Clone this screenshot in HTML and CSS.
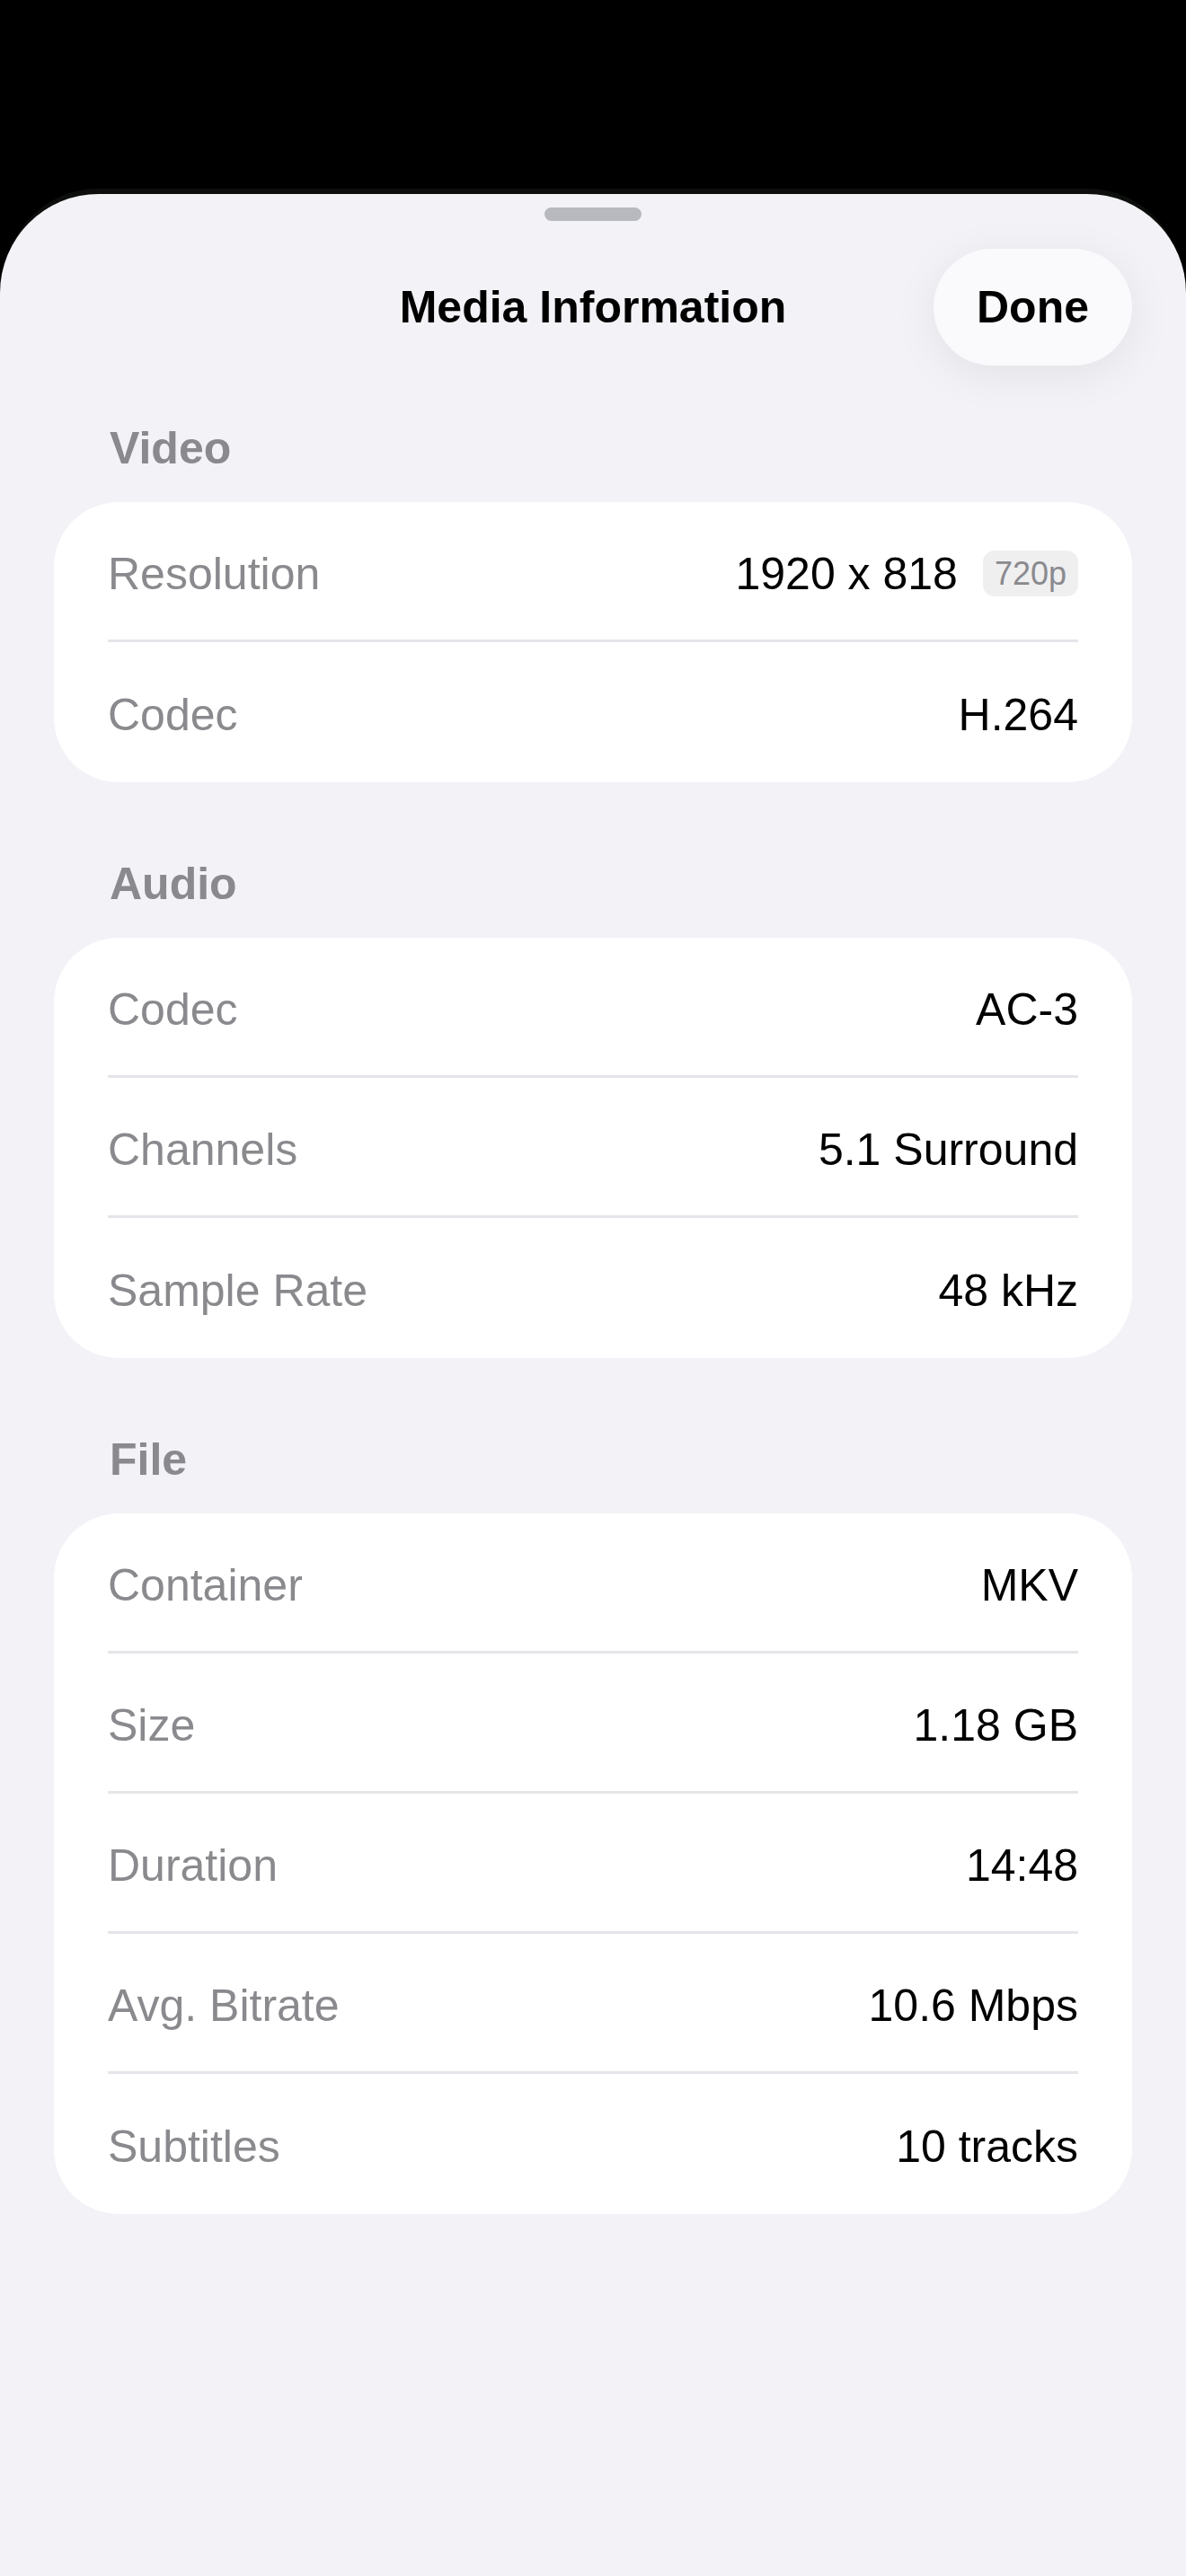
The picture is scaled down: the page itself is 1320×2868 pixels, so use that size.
FILE: index.html
```html
<!DOCTYPE html>
<html lang="en">
<head>
<meta charset="utf-8"/>
<meta content="width=device-width, initial-scale=1.0" name="viewport"/>
<title>Media Information</title>
<link rel="stylesheet" href="styles.css">
</head>
<body>
<div class="sheet">
  <div class="grabber"></div>

  <div class="navbar">
    <span></span>
    <h1 class="nav-title">Media Information</h1>
    <button class="done-btn">Done</button>
  </div>

  <!-- Video -->
  <h2 class="section-title">Video</h2>
  <div class="card">
    <div class="row">
      <span class="row-label">Resolution</span>
      <span class="row-value"><span>1920 x 818</span><span class="badge">720p</span></span>
    </div>
    <div class="row">
      <span class="row-label">Codec</span>
      <span class="row-value">H.264</span>
    </div>
  </div>

  <!-- Audio -->
  <h2 class="section-title">Audio</h2>
  <div class="card">
    <div class="row">
      <span class="row-label">Codec</span>
      <span class="row-value">AC-3</span>
    </div>
    <div class="row">
      <span class="row-label">Channels</span>
      <span class="row-value">5.1 Surround</span>
    </div>
    <div class="row">
      <span class="row-label">Sample Rate</span>
      <span class="row-value">48 kHz</span>
    </div>
  </div>

  <!-- File -->
  <h2 class="section-title">File</h2>
  <div class="card">
    <div class="row">
      <span class="row-label">Container</span>
      <span class="row-value">MKV</span>
    </div>
    <div class="row">
      <span class="row-label">Size</span>
      <span class="row-value">1.18 GB</span>
    </div>
    <div class="row">
      <span class="row-label">Duration</span>
      <span class="row-value">14:48</span>
    </div>
    <div class="row">
      <span class="row-label">Avg. Bitrate</span>
      <span class="row-value">10.6 Mbps</span>
    </div>
    <div class="row">
      <span class="row-label">Subtitles</span>
      <span class="row-value">10 tracks</span>
    </div>
  </div>
</div>
</body>
</html>
```

FILE: styles.css
```css
body {
  margin: 0;
  background: #000;
  font-family: "Liberation Sans", Arial, sans-serif;
  color: #000;
}

.sheet {
  margin-top: 216px;
  min-height: 2652px;
  box-sizing: border-box;
  background: #f2f2f7;
  border-radius: 110px 110px 0 0;
  box-shadow: 0 -10px 0 -4px #0c0f0b;
  padding: 15px 60px 0;
}

.grabber {
  width: 108px;
  height: 15px;
  margin: 0 auto;
  border-radius: 8px;
  background: #b8b8bf;
}

.navbar {
  display: grid;
  grid-template-columns: 1fr auto 1fr;
  align-items: center;
  height: 130px;
  margin-top: 31px;
}

.nav-title {
  margin: 0;
  font-size: 50px;
  font-weight: bold;
  line-height: 60px;
}

.done-btn {
  justify-self: end;
  width: 221px;
  height: 130px;
  border: none;
  border-radius: 65px;
  background: #fafafd;
  box-shadow: 0 10px 50px rgba(0, 0, 0, 0.07);
  font-family: inherit;
  font-size: 50px;
  font-weight: bold;
  color: #000;
  padding: 0;
}

.section-title {
  margin: 62px 0 30px;
  padding-left: 62px;
  font-size: 50px;
  font-weight: bold;
  line-height: 60px;
  color: #8a8a8e;
}

.card + .section-title {
  margin-top: 83px;
}

.card {
  background: #fff;
  border-radius: 72px;
  padding: 0 60px;
}

.row {
  display: flex;
  justify-content: space-between;
  align-items: center;
  height: 156px;
  box-sizing: border-box;
  padding-top: 6px;
  border-bottom: 3px solid #e5e5ea;
  font-size: 50px;
}

.row:last-child {
  border-bottom: none;
}

.row-label {
  color: #8a8a8e;
}

.row-value {
  display: flex;
  align-items: center;
  gap: 28px;
}

.badge {
  display: inline-block;
  height: 51px;
  line-height: 51px;
  padding: 0 13px;
  border-radius: 13px;
  background: #efeff0;
  color: #8a8a8e;
  font-size: 36px;
}
```
